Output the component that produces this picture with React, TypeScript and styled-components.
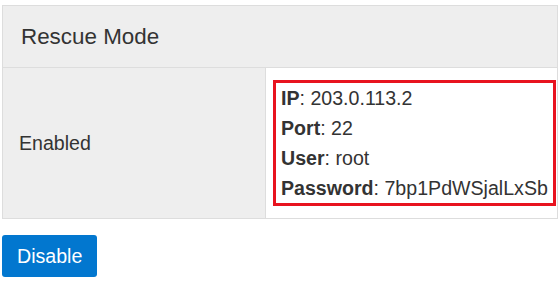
import React from "react";
import styled, { createGlobalStyle } from "styled-components";

const Global = createGlobalStyle`
  html, body { margin: 0; padding: 0; background: #fff; }
  body {
    font-family: "Liberation Sans", Arial, sans-serif;
    color: #333;
  }
`;

const Page = styled.div`
  padding: 5px 0 0 2px;
  display: flex;
  flex-direction: column;
  align-items: flex-start;
`;

const Table = styled.table`
  border-collapse: collapse;
  width: 556px;
  border: 1px solid #ddd;
`;

const HeaderCell = styled.th`
  background: #eeeeee;
  height: 61px;
  padding: 0 0 0 18px;
  text-align: left;
  font-weight: normal;
  font-size: 22.4px;
  border-bottom: 1px solid #ddd;
`;

const LabelCell = styled.td`
  background: #eeeeee;
  width: 246px;
  height: 150px;
  padding: 0 0 0 16px;
  font-size: 19.6px;
  vertical-align: middle;
  border-right: 1px solid #ddd;
`;

const ValueCell = styled.td`
  background: #fff;
  padding: 0 0 0 7px;
  vertical-align: middle;
`;

const Highlight = styled.div`
  display: inline-block;
  border: 3px solid #e8131f;
  padding: 0 5px;
  font-size: 19.6px;
  line-height: 30px;
  white-space: nowrap;
`;

const Line = styled.div``;

const Key = styled.b`
  font-weight: bold;
`;

const Button = styled.button`
  margin-top: 16px;
  height: 42px;
  padding: 0 15px;
  border: none;
  border-radius: 3px;
  background: #0277cf;
  color: #fff;
  font-family: "Liberation Sans", Arial, sans-serif;
  font-size: 19.6px;
  cursor: pointer;
`;

const rows: [string, string][] = [
  ["IP", "203.0.113.2"],
  ["Port", "22"],
  ["User", "root"],
  ["Password", "7bp1PdWSjalLxSb"],
];

export default function App() {
  return (
    <>
      <Global />
      <Page>
        <Table>
          <thead>
            <tr>
              <HeaderCell colSpan={2}>Rescue Mode</HeaderCell>
            </tr>
          </thead>
          <tbody>
            <tr>
              <LabelCell>Enabled</LabelCell>
              <ValueCell>
                <Highlight>
                  {rows.map(([k, v]) => (
                    <Line key={k}>
                      <Key>{k}</Key>: {v}
                    </Line>
                  ))}
                </Highlight>
              </ValueCell>
            </tr>
          </tbody>
        </Table>
        <Button>Disable</Button>
      </Page>
    </>
  );
}
